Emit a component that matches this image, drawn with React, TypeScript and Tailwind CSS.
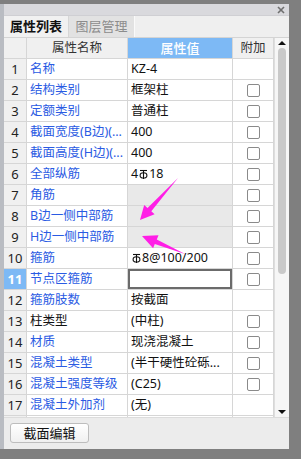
import React from "react";

type Row = {
  n: number;
  name: string;
  value?: React.ReactNode;
  cb: boolean;
  gray?: boolean;
  editing?: boolean;
  black?: boolean;
  hideNum?: boolean;
};

function Rebar() {
  return (
    <svg width="9" height="10" viewBox="0 0 9 10" className="inline-block mx-[1px]" aria-hidden>
      <line x1="1" y1="1.5" x2="8" y2="1.5" stroke="#111" strokeWidth="1.1" />
      <line x1="4.5" y1="1.5" x2="4.5" y2="10" stroke="#111" strokeWidth="1.1" />
      <ellipse cx="4.5" cy="6.4" rx="3.4" ry="2.6" fill="none" stroke="#111" strokeWidth="1.1" />
    </svg>
  );
}

const rows: Row[] = [
  { n: 1, name: "名称", value: "KZ-4", cb: false },
  { n: 2, name: "结构类别", value: "框架柱", cb: true },
  { n: 3, name: "定额类别", value: "普通柱", cb: true },
  { n: 4, name: "截面宽度(B边)(...", value: "400", cb: true },
  { n: 5, name: "截面高度(H边)(...", value: "400", cb: true },
  {
    n: 6,
    name: "全部纵筋",
    value: (
      <span className="flex items-center">
        4<Rebar />18
      </span>
    ),
    cb: true,
  },
  { n: 7, name: "角筋", cb: true, gray: true },
  { n: 8, name: "B边一侧中部筋", cb: true, gray: true },
  { n: 9, name: "H边一侧中部筋", cb: true, gray: true },
  {
    n: 10,
    name: "箍筋",
    value: (
      <span className="flex items-center">
        <Rebar />8@100/200
      </span>
    ),
    cb: true,
  },
  { n: 11, name: "节点区箍筋", cb: true, editing: true },
  { n: 12, name: "箍筋肢数", value: "按截面", cb: false },
  { n: 13, name: "柱类型", value: "(中柱)", cb: true, black: true },
  { n: 14, name: "材质", value: "现浇混凝土", cb: true },
  { n: 15, name: "混凝土类型", value: "(半干硬性砼砾...", cb: true },
  { n: 16, name: "混凝土强度等级", value: "(C25)", cb: true },
  { n: 17, name: "混凝土外加剂", value: "(无)", cb: false },
  { n: 18, name: "", value: "", cb: false, hideNum: true },
];

function Checkbox() {
  return <div className="w-[13px] h-[13px] rounded-[2px] border-[1.5px] border-[#8a8a8a] bg-white" />;
}

export default function App() {
  const cell = "h-[21px] border-r border-b border-[#d6d6d6] flex items-center overflow-hidden whitespace-nowrap";
  return (
    <div className="relative w-[301px] h-[459px] bg-[#7f7f7f] flex flex-col font-['Noto_Sans','Noto_Sans_CJK_SC',sans-serif] text-[12.5px] leading-none text-[#111] overflow-hidden">
      <div className="h-[4px] shrink-0" />
      <div className="flex h-[445px] shrink-0">
        <div className="w-[4px] bg-[#b9bcc2]" />
        <div className="w-[285px] flex flex-col bg-[#efefef]">
          {/* title bar */}
          <div className="h-[12px] bg-[#d9d9dd] flex items-center justify-end pr-[4px] border-b border-[#cfcfd3]">
            <svg width="8" height="8" viewBox="0 0 8 8" aria-hidden>
              <line x1="1" y1="1" x2="7" y2="7" stroke="#6f6f6f" strokeWidth="1.6" />
              <line x1="7" y1="1" x2="1" y2="7" stroke="#6f6f6f" strokeWidth="1.6" />
            </svg>
          </div>
          {/* tabs */}
          <div className="h-[22px] flex bg-[#efefef] border-b border-[#d4d4d4]">
            <div className="w-[65px] flex items-center justify-center font-bold text-[13px] text-[#111] bg-[#f1f1f1] border-r border-[#d6d6d6]">
              属性列表
            </div>
            <div className="w-[66px] flex items-center justify-center text-[13px] text-[#8c8c8c] bg-[#e2e2e2] border-r border-[#fafafa]">
              图层管理
            </div>
          </div>
          {/* grid */}
          <div className="h-[379px] flex overflow-hidden bg-white">
            <div className="w-[270px] grid grid-cols-[23px_101px_105px_41px] content-start">
              <div className={`${cell} bg-[#f0f0f0]`} />
              <div className={`${cell} bg-[#f0f0f0] justify-center text-[#333]`}>属性名称</div>
              <div className={`${cell} bg-[#7db9f5] justify-center text-white text-[13px] font-medium`}>属性值</div>
              <div className={`${cell} bg-[#f0f0f0] justify-center text-[#333]`}>附加</div>
              {rows.map((r) => (
                <React.Fragment key={r.n}>
                  <div
                    className={`${cell} justify-center text-[13px] ${
                      r.editing ? "bg-[#7db9f5] text-white font-bold" : "bg-[#f0f0f0] text-[#222]"
                    }`}
                  >
                    {r.hideNum ? null : r.n}
                  </div>
                  <div className={`${cell} pl-[3px] ${r.black ? "text-[#111]" : "text-[#2a5be3]"}`}>{r.name}</div>
                  {r.editing ? (
                    <div className="h-[21px] border-r border-b border-[#d6d6d6] p-0">
                      <div className="w-full h-full border-2 border-[#6b6b6b] bg-white" />
                    </div>
                  ) : (
                    <div className={`${cell} pl-[3px] ${r.gray ? "bg-[#e9e9e9]" : "bg-white"}`}>{r.value}</div>
                  )}
                  <div className={`${cell} justify-center`}>{r.cb ? <Checkbox /> : null}</div>
                </React.Fragment>
              ))}
            </div>
            {/* scrollbar */}
            <div className="w-[15px] bg-[#f6f6f6] flex flex-col items-center pt-[3px] pb-[3px] border-l border-[#dedede]">
              <svg width="8" height="4" viewBox="0 0 8 4" aria-hidden>
                <polygon points="0,4 4,0 8,4" fill="#111" />
              </svg>
              <div className="mt-[3px] w-[8px] h-[226px] rounded-full bg-[#c9c9c9]" />
              <div className="flex-1" />
              <svg width="8" height="4" viewBox="0 0 8 4" aria-hidden>
                <polygon points="0,0 8,0 4,4" fill="#111" />
              </svg>
            </div>
          </div>
          {/* bottom bar */}
          <div className="flex-1 bg-[#ececec] pl-[6px] pt-[5px] border-t border-[#dcdcdc]">
            <button className="w-[79px] h-[20px] px-0 rounded-[3px] border border-[#bdbdbd] bg-gradient-to-b from-[#ffffff] to-[#f0f0f0] text-[13px] leading-[16px] whitespace-nowrap text-[#111] flex items-center justify-center">
              截面编辑
            </button>
          </div>
        </div>
        <div className="flex-1" />
      </div>
      <div className="flex-1" />

      {/* annotation arrows */}
      <svg className="absolute left-0 top-0 pointer-events-none" width="301" height="459" viewBox="0 0 301 459" aria-hidden>
        <polygon
          points="178,178 151.3,211.3 154.6,214.3 140,220 144.2,204.9 147.5,207.9"
          fill="#ff1ee6"
        />
        <polygon
          points="185,254 154.8,244.1 153.1,248.3 142,236 158.5,235.3 156.8,239.5"
          fill="#ff1ee6"
        />
      </svg>
    </div>
  );
}
